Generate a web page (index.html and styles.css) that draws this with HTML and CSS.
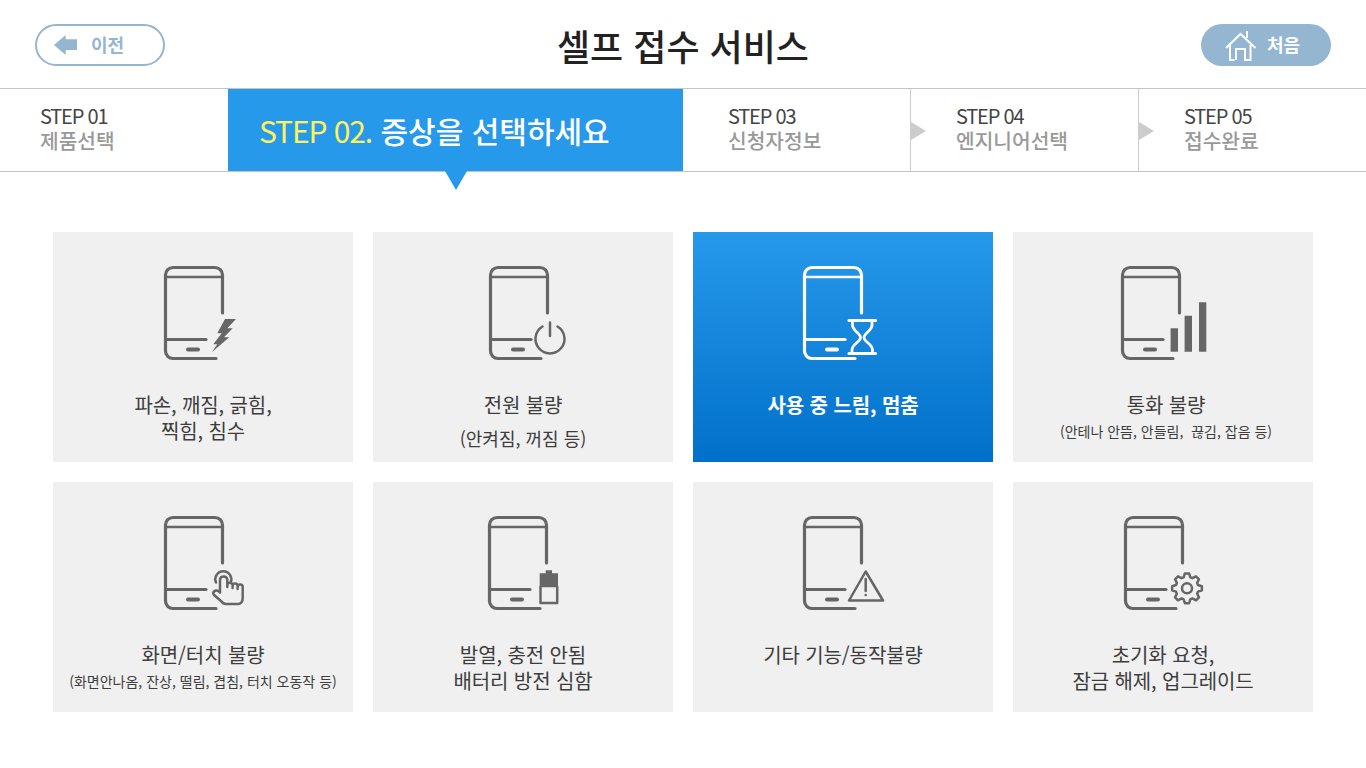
FILE: index.html
```html
<!DOCTYPE html>
<html lang="ko">
<head>
  <meta charset="UTF-8" />
  <meta name="viewport" content="width=device-width, initial-scale=1" />
  <title>셀프 접수 서비스</title>
  <link rel="stylesheet" href="styles.css">
</head>
<body>

<svg class="defs" width="0" height="0">
  <symbol id="phone" viewBox="0 0 100 100" overflow="visible">
    <path class="line" d="M58.500 47V9a7.500 7.500 0 0 0-7.500-7.500H9A7.500 7.500 0 0 0 1.500 9v76A7.500 7.500 0 0 0 9 92.500h43"/>
    <path class="thin" d="M2 11h56"/>
    <path class="line" d="M2 73.500h40"/>
    <path class="line home-key" d="M24 83.500h10"/>
  </symbol>
</svg>

<!-- 상단 -->
<header class="top">
  <button class="btn-back">
    <svg class="back-arrow" width="23" height="20" viewBox="0 0 23 20"><path d="M0 10 11.700 0v4.300H23v10.700H11.700V20z"/></svg>
    이전
  </button>
  <h1>셀프 접수 서비스</h1>
  <button class="btn-home">
    <svg class="home-icon" width="32" height="31" viewBox="0 0 32 31">
      <path d="M1 18 15.500 4 30.500 18M5 15v15h4.500M11 30V19h9v11h5.500V15M22 8V1"/>
    </svg>
    처음
  </button>
</header>

<!-- 단계 -->
<nav class="steps">
  <div class="step"><b>STEP 01</b><span>제품선택</span></div>
  <div class="step-active"><em>STEP 02.</em> 증상을 선택하세요</div>
  <div class="step step-next"><b>STEP 03</b><span>신청자정보</span></div>
  <div class="step step-next step-arrow"><b>STEP 04</b><span>엔지니어선택</span></div>
  <div class="step step-next step-arrow"><b>STEP 05</b><span>접수완료</span></div>
</nav>

<main class="grid">
  <a class="card">
    <svg class="icon" viewBox="0 0 100 100">
      <g transform="translate(11 2)">
        <use href="#phone" width="100" height="100"/>
        <path class="fill" d="M72 53H61L53.300 67.300H57.700L49.300 78.300H53.300L47.700 86.300 65.300 71.300H60L68.700 62.300H63.300z"/>
      </g>
    </svg>
    <p class="title">파손, 깨짐, 긁힘,<br>찍힘, 침수</p>
  </a>

  <a class="card">
    <svg class="icon" viewBox="0 0 100 100">
      <g transform="translate(16 2)">
        <use href="#phone" width="100" height="100"/>
        <path class="thin2" d="M53.500 60.500a14.500 14.500 0 1 0 15 0M61 56.500V70"/>
      </g>
    </svg>
    <p class="title">전원 불량</p>
    <p class="sub sub-big">(안켜짐, 꺼짐 등)</p>
  </a>

  <a class="card card-on">
    <svg class="icon" viewBox="0 0 100 100">
      <g transform="translate(10 2)">
        <use href="#phone" width="100" height="100"/>
        <path class="line" d="M46 54.500h26.500M46 87.500h26.500"/>
        <path class="line glass" d="M49.500 55v4c0 6 8 8 8 12.500s-8.500 6.500-8.500 12.500v3M69 55v4c0 6-8 8-8 12.500s8.500 6.500 8.500 12.500v3"/>
      </g>
    </svg>
    <p class="title">사용 중 느림, 멈춤</p>
  </a>

  <a class="card card-shift">
    <svg class="icon" viewBox="0 0 100 100">
      <g transform="translate(8 2)">
        <use href="#phone" width="100" height="100"/>
        <path class="fill" d="M49.600 62.300H57V85.700H49.600zM63.600 49.700H71V85.700H63.600zM78 36.300H85.300V85.700H78z"/>
      </g>
    </svg>
    <p class="title">통화 불량</p>
    <p class="sub">(안테나 안뜸, 안들림, &nbsp;끊김, 잡음 등)</p>
  </a>

  <a class="card">
    <svg class="icon" viewBox="0 0 100 100">
      <g transform="translate(11 2)">
        <use href="#phone" width="100" height="100"/>
        <path class="thin2" d="M56 76V63.500a3.700 3.700 0 0 1 7.300 0V71M63.300 69a2.700 2.700 0 0 1 5.300 0v3M68.600 70a2.500 2.500 0 0 1 5 0v3M73.700 71a2.500 2.500 0 0 1 5 0v11q0 6-5 6H62q-3 0-5-3l-7-6q-1.500-2 0-3.500 2-2 5 0l1 1M52 66.500a8 8 0 1 1 14.600 0"/>
      </g>
    </svg>
    <p class="title">화면/터치 불량</p>
    <p class="sub">(화면안나옴, 잔상, 떨림, 겹침, 터치 오동작 등)</p>
  </a>

  <a class="card">
    <svg class="icon" viewBox="0 0 100 100">
      <g transform="translate(15 2)">
        <use href="#phone" width="100" height="100"/>
        <path class="fill" d="M57.700 54.300H64V57.300H70V71.300H51.700V57.300H57.700z"/>
        <path class="thin2" d="M52.500 71V87H69.200V71"/>
      </g>
    </svg>
    <p class="title">발열, 충전 안됨<br>배터리 방전 심함</p>
  </a>

  <a class="card">
    <svg class="icon" viewBox="0 0 100 100">
      <g transform="translate(10 2)">
        <use href="#phone" width="100" height="100"/>
        <path class="thin2" d="M62.700 55.500 46 84.500H80z"/>
        <path class="thin2" d="M62.700 63V75"/>
        <circle class="fill" cx="62.700" cy="79" r="1.300"/>
      </g>
    </svg>
    <p class="title">기타 기능/동작불량</p>
  </a>

  <a class="card">
    <svg class="icon" viewBox="0 0 100 100">
      <g transform="translate(11 2)">
        <use href="#phone" width="100" height="100"/>
        <g transform="translate(63 72.300)">
          <path class="thin2" d="M-3.360-11-2.090-14.850H2.090L3.360-11 5.400-10.150 9.020-11.980 11.980-9.020 10.150-5.400 11-3.360 14.850-2.090V2.090L11 3.360 10.150 5.400 11.980 9.020 9.020 11.980 5.400 10.150 3.360 11 2.090 14.850H-2.090L-3.360 11-5.400 10.150-9.020 11.980-11.980 9.020-10.150 5.400-11 3.360-14.850 2.090V-2.090L-11-3.360-10.150-5.400-11.980-9.020-9.020-11.980-5.400-10.150z"/>
          <circle class="thin2" r="5"/>
        </g>
      </g>
    </svg>
    <p class="title">초기화 요청,<br>잠금 해제, 업그레이드</p>
  </a>
</main>

</body>
</html>
```

FILE: styles.css
```css
:root {
  --blue: #2799eb;
  --soft-blue: #95b6d1;
  --line: #c4c4c4;
  --icon: #666;
  --text: #3d3d3d;
}

* {
  box-sizing: border-box;
}

body {
  margin: 0;
  background: #fff;
  color: var(--text);
  font-family: "Noto Sans CJK KR", "Noto Sans", sans-serif;
}

.defs {
  position: absolute;
}

/* 상단 */
.top {
  height: 88px;
  padding: 24px 35px 0;
  display: flex;
  justify-content: space-between;
  align-items: flex-start;
}

.top h1 {
  margin: 0;
  font-size: 36px;
  line-height: 42px;
  font-weight: 500;
  color: #222;
}

.btn-back, .btn-home {
  width: 130px;
  height: 42px;
  border-radius: 21px;
  font-family: inherit;
  font-size: 18px;
  font-weight: 700;
  display: flex;
  align-items: center;
  padding: 0 0 2px;
}

.btn-back {
  background: #fff;
  border: 2px solid var(--soft-blue);
  color: var(--soft-blue);
  padding-left: 17px;
  gap: 14px;
}

.back-arrow {
  margin-top: 2px;
}

.back-arrow path {
  fill: var(--soft-blue);
}

.btn-home {
  background: var(--soft-blue);
  border: none;
  color: #fff;
  padding-left: 24px;
  gap: 10px;
}

.home-icon {
  margin-top: 3px;
}

.home-icon path {
  fill: none;
  stroke: #fff;
  stroke-width: 2;
}

/* 단계 */
.steps {
  height: 84px;
  border-top: 1px solid var(--line);
  border-bottom: 1px solid var(--line);
  display: grid;
  grid-template-columns: 228px 455px 227px 228px 228px;
}

.step {
  padding: 14px 0 0 40px;
  position: relative;
  display: flex;
  flex-direction: column;
}

.step b {
  font-size: 20px;
  line-height: 25px;
  font-weight: 400;
  letter-spacing: -1.200px;
  color: #444;
}

.step span {
  font-size: 20.300px;
  line-height: 25px;
  font-weight: 500;
  color: #999;
}

.step-next {
  padding-left: 45px;
}

.step-arrow {
  border-left: 1px solid #ccc;
}

.step-arrow::before {
  content: "";
  position: absolute;
  left: 0;
  top: 33px;
  border-left: 15px solid #ccc;
  border-top: 9px solid transparent;
  border-bottom: 9px solid transparent;
}

.step-active {
  background: var(--blue);
  color: #fff;
  font-size: 30px;
  line-height: 82px;
  font-weight: 500;
  padding-left: 31px;
  position: relative;
}

.step-active em {
  font-style: normal;
  font-weight: 400;
  letter-spacing: -1.100px;
  color: #fff35a;
}

.step-active::after {
  content: "";
  position: absolute;
  left: 217px;
  top: 82px;
  border-top: 19px solid var(--blue);
  border-left: 11px solid transparent;
  border-right: 11px solid transparent;
}

/* 증상 카드 */
.grid {
  padding: 60px 53px 0;
  display: grid;
  grid-template-columns: repeat(4, 300px);
  grid-auto-rows: 230px;
  gap: 20px;
}

.card {
  background: #f0f0f0;
  padding-top: 32px;
  text-align: center;
  color: var(--text);
}

.card-shift p {
  padding-left: 6px;
}

.icon {
  display: block;
  width: 100px;
  height: 100px;
  margin: 0 auto;
  overflow: visible;
  color: var(--icon);
}

.line, .thin, .thin2 {
  fill: none;
  stroke: currentColor;
  stroke-linecap: round;
  stroke-linejoin: round;
}

.line {
  stroke-width: 3.200;
}

.home-key {
  stroke-width: 4;
}

.glass {
  stroke-width: 2.800;
}

.thin {
  stroke-width: 2.400;
  stroke-linecap: butt;
}

.thin2 {
  stroke-width: 2.500;
}

.fill {
  fill: currentColor;
}

.title {
  margin: 28px 0 0;
  font-size: 20px;
  line-height: 26px;
  font-weight: 400;
  letter-spacing: -0.1px;
}

.sub {
  margin: 2px 0 0;
  font-size: 14px;
  line-height: 22px;
}

.sub-big {
  margin-top: 9px;
  font-size: 18px;
}

.card-on {
  background: linear-gradient(#2799eb, #0070c9);
  color: #fff;
}

.card-on .icon {
  color: #fff;
}

.card-on .title {
  font-weight: 700;
}
```
